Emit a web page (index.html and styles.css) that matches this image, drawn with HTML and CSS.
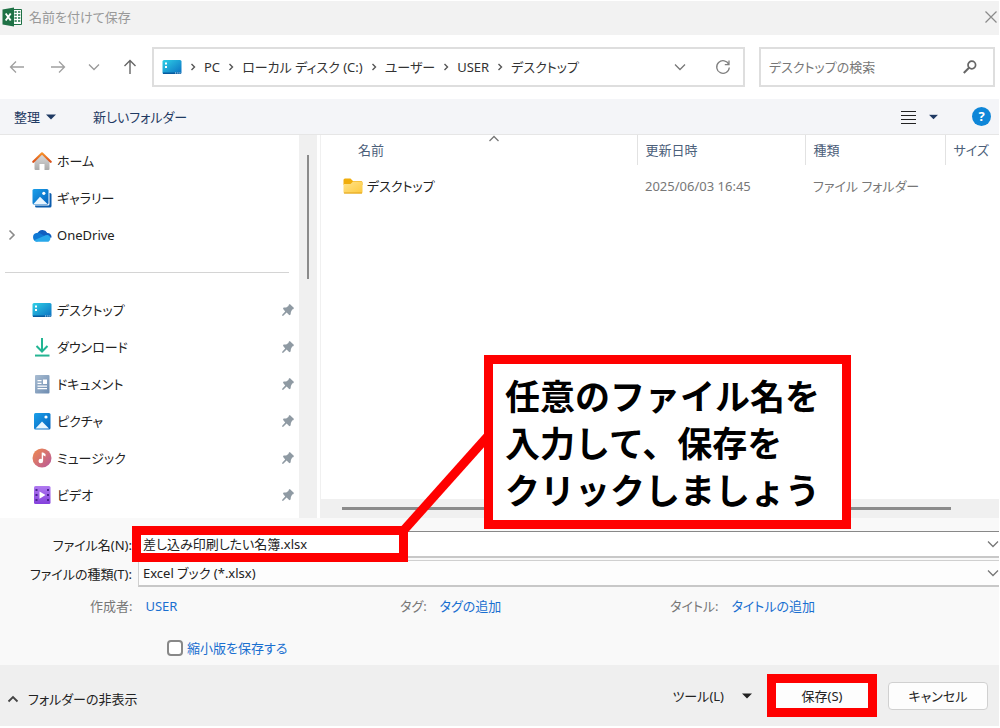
FILE: index.html
```html
<!DOCTYPE html>
<html lang="ja">
<head>
    <meta charset="UTF-8">
    <meta name="viewport" content="width=device-width, initial-scale=1.0">
    <title>名前を付けて保存</title>
    <link rel="stylesheet" href="styles.css">
</head>
<body>
    <!-- shared icons -->
    <svg class="defs" width="0" height="0" aria-hidden="true">
        <defs>
            <linearGradient id="g-desk" x1="0" y1="0" x2="1" y2="1">
                <stop offset="0" stop-color="#2fd0e6"/>
                <stop offset="1" stop-color="#0a6fc2"/>
            </linearGradient>
            <linearGradient id="g-pic" x1="0" y1="0" x2="1" y2="1">
                <stop offset="0" stop-color="#1aa0ea"/>
                <stop offset="1" stop-color="#0763bd"/>
            </linearGradient>
            <linearGradient id="g-roof" x1="0" y1="0" x2="0" y2="1">
                <stop offset="0" stop-color="#f7912a"/>
                <stop offset="1" stop-color="#d9511c"/>
            </linearGradient>
            <linearGradient id="g-wall" x1="0" y1="0" x2="0" y2="1">
                <stop offset="0" stop-color="#dcdcdc"/>
                <stop offset="1" stop-color="#aaa"/>
            </linearGradient>
            <linearGradient id="g-music" x1="0" y1="0" x2="1" y2="1">
                <stop offset="0" stop-color="#f08a4c"/>
                <stop offset="1" stop-color="#b8589c"/>
            </linearGradient>
            <linearGradient id="g-video" x1="0" y1="0" x2="0" y2="1">
                <stop offset="0" stop-color="#b07af0"/>
                <stop offset="1" stop-color="#8440dc"/>
            </linearGradient>
            <linearGradient id="g-doc" x1="0" y1="0" x2="1" y2="1">
                <stop offset="0" stop-color="#a9bdd2"/>
                <stop offset="1" stop-color="#6c8bb0"/>
            </linearGradient>
            <linearGradient id="g-folder" x1="0" y1="0" x2="1" y2="1">
                <stop offset="0" stop-color="#ffe38c"/>
                <stop offset="1" stop-color="#fdc93c"/>
            </linearGradient>
            <linearGradient id="g-down" x1="0" y1="0" x2="0" y2="1">
                <stop offset="0" stop-color="#35c3a0"/>
                <stop offset="1" stop-color="#16a585"/>
            </linearGradient>
        </defs>
        <symbol id="i-desktop" viewBox="0 0 20 20">
            <rect x="0.500" y="3" width="19" height="14" rx="1.500" fill="url(#g-desk)"/>
            <path d="M3 5.500h2v2H3zM3 9h2v2H3z" fill="#fff"/>
            <path d="M1 15.500h18v1.500H1z" fill="#075a9e"/>
            <path d="M13 15.500h1.200v1H13zM15.200 15.500h1.200v1h-1.200zM17.300 15.500h1.200v1h-1.200z" fill="#cfe9f8"/>
        </symbol>
        <symbol id="i-pin" viewBox="0 0 12 12">
            <path d="M7.800 0 12 4 11.200 5.200 10.200 5.600 8.900 8 8.600 10.600 7.400 11.200 4.600 8.600 1 12 0 11.600 0.400 10.600 3.200 7.400 1 4.800 1.600 3.600 4.200 3.400 6.400 2 6.800 0.800Z" fill="#8f9aa3"/>
        </symbol>
        <symbol id="i-down" viewBox="0 0 12 12">
            <path d="M1 3.500 6 8.500 11 3.500" fill="none" stroke="currentColor" stroke-width="1.300"/>
        </symbol>
        <symbol id="i-sep" viewBox="0 0 6 8">
            <path d="M1.500 1 4.500 4 1.500 7" fill="none" stroke="currentColor" stroke-width="1.400"/>
        </symbol>
        <symbol id="i-tri" viewBox="0 0 10 6">
            <path d="M0 0.500h10L5 5.500z" fill="currentColor"/>
        </symbol>
    </svg>

    <main class="dialog">
        <header class="titlebar">
            <svg class="icon" viewBox="0 0 20 20" aria-hidden="true">
                <path d="M11 2.500h8.500v15H11z" fill="#fff" stroke="#1e7145"/>
                <path d="M12.500 5h2.300M12.500 8h2.300M12.500 11h2.300M12.500 14h2.300M16 5h2.300M16 8h2.300M16 11h2.300M16 14h2.300" stroke="#1e7145" stroke-width="1.600"/>
                <path d="M0.500 2.500 12 0.500v19L0.500 17.500z" fill="#1e7145"/>
                <path d="M3.700 6.500 8.700 13.500M8.700 6.500 3.700 13.500" stroke="#fff" stroke-width="1.900"/>
            </svg>
            <h1 class="title">名前を付けて保存</h1>
            <button class="plain close" aria-label="閉じる">
                <svg width="14" height="14" viewBox="0 0 14 14"><path d="M1.500 1.500l11 11M12.500 1.500l-11 11" stroke="#8a8a8a" stroke-width="1.200"/></svg>
            </button>
        </header>

        <nav class="navbar">
            <div class="arrows">
                <button class="plain" aria-label="戻る"><svg width="16" height="16" viewBox="0 0 16 16"><path d="M15 8H1.500M7 2.500 1.500 8 7 13.500" fill="none" stroke="#a0a0a0" stroke-width="1.300"/></svg></button>
                <button class="plain" aria-label="進む"><svg width="16" height="16" viewBox="0 0 16 16"><path d="M1 8h13.500M9 2.500 14.500 8 9 13.500" fill="none" stroke="#a0a0a0" stroke-width="1.300"/></svg></button>
                <button class="plain history" aria-label="最近の場所"><svg width="12" height="12"><use href="#i-down"/></svg></button>
                <button class="plain" aria-label="上へ"><svg width="16" height="16" viewBox="0 0 16 16"><path d="M8 15V1.500M2.500 7 8 1.500 13.500 7" fill="none" stroke="#666" stroke-width="1.400"/></svg></button>
            </div>
            <div class="address">
                <svg class="icon" aria-hidden="true"><use href="#i-desktop"/></svg>
                <svg class="sep"><use href="#i-sep"/></svg>
                <a href="#">PC</a>
                <svg class="sep"><use href="#i-sep"/></svg>
                <a href="#">ローカル ディスク (C:)</a>
                <svg class="sep"><use href="#i-sep"/></svg>
                <a href="#">ユーザー</a>
                <svg class="sep"><use href="#i-sep"/></svg>
                <a href="#">USER</a>
                <svg class="sep"><use href="#i-sep"/></svg>
                <a href="#">デスクトップ</a>
                <span class="address-tools">
                    <button class="plain" aria-label="以前の場所"><svg width="12" height="12"><use href="#i-down"/></svg></button>
                    <button class="plain" aria-label="更新"><svg width="16" height="16" viewBox="0 0 16 16"><path d="M13.800 5.500A6.300 6.300 0 1 0 14.300 8.500M14 1.500V5.700H9.800" fill="none" stroke="#808080" stroke-width="1.300"/></svg></button>
                </span>
            </div>
            <div class="search">
                <input type="text" aria-label="デスクトップの検索" placeholder="デスクトップの検索">
                <svg width="14" height="14" viewBox="0 0 14 14" aria-hidden="true"><circle cx="8.800" cy="5" r="3.800" fill="none" stroke="#666" stroke-width="1.700"/><path d="M6 7.800 0.800 13" stroke="#666" stroke-width="2"/></svg>
            </div>
        </nav>

        <div class="toolbar">
            <button class="plain">整理 <svg width="10" height="6"><use href="#i-tri"/></svg></button>
            <button class="plain">新しいフォルダー</button>
            <span class="toolbar-right">
                <button class="plain view" aria-label="表示方法">
                    <svg width="15" height="14" viewBox="0 0 15 14"><path d="M0 1.500h15M0 5.500h15M0 9.500h15M0 13.500h15" stroke="#222" stroke-width="1"/></svg>
                    <svg width="9" height="6" viewBox="0 0 10 6"><use href="#i-tri"/></svg>
                </button>
                <button class="help" aria-label="ヘルプ">?</button>
            </span>
        </div>

        <div class="content">
            <aside class="sidebar">
                <ul class="places">
                    <li>
                        <span class="expand"></span>
                        <svg class="icon" viewBox="0 0 20 20"><path d="M2.500 9.500 10 3l7.500 6.500V18a1 1 0 0 1-1 1h-4v-6h-5v6h-4a1 1 0 0 1-1-1z" fill="url(#g-wall)"/><path d="M1.300 10.800 10 2.300l8.700 8.500" fill="none" stroke="url(#g-roof)" stroke-width="2.200" stroke-linecap="round" stroke-linejoin="round"/></svg>
                        <a href="#">ホーム</a>
                    </li>
                    <li>
                        <span class="expand"></span>
                        <svg class="icon" viewBox="0 0 20 20"><path d="M4 5h14a1.500 1.500 0 0 1 1.500 1.500V18a1.500 1.500 0 0 1-1.500 1.500H4.500A1.500 1.500 0 0 1 3 18z" fill="#0b5cad"/><rect x="0" y="0.500" width="17.500" height="17" rx="1.500" fill="#fff"/><rect x="0.500" y="1" width="16" height="15.500" rx="1.500" fill="url(#g-pic)"/><path d="M1.500 16 8 8.800 15.500 16z" fill="#eaf6ff"/><circle cx="11.800" cy="5.300" r="1.600" fill="#fff"/></svg>
                        <a href="#">ギャラリー</a>
                    </li>
                    <li>
                        <button class="plain expand" aria-label="展開"><svg width="8" height="12" viewBox="0 0 8 12"><path d="M1.500 1.500 6 6 1.500 10.500" fill="none" stroke="#8a8a8a" stroke-width="1.600"/></svg></button>
                        <svg class="icon" viewBox="0 0 20 20"><path d="M5.500 8.500A5.400 5.400 0 0 1 15.300 8 4 4 0 0 1 19.500 12.500L10 14z" fill="#0f5fc0"/><path d="M4.500 8a4 4 0 0 1 4 .5L15 12.500 5 16.500a4.300 4.300 0 0 1-.5-8.500z" fill="#0f78d4"/><path d="M2 15.300 12 11a5 5 0 0 1 4-1 3.700 3.700 0 0 1 .5 6.700H4.500A4.500 4.500 0 0 1 2 15.300z" fill="#28a8ea"/></svg>
                        <a href="#">OneDrive</a>
                    </li>
                </ul>
                <hr class="divider">
                <ul class="places">
                    <li>
                        <span class="expand"></span>
                        <svg class="icon"><use href="#i-desktop"/></svg>
                        <a href="#">デスクトップ</a>
                        <svg class="pin"><use href="#i-pin"/></svg>
                    </li>
                    <li>
                        <span class="expand"></span>
                        <svg class="icon" viewBox="0 0 20 20"><path d="M10 1v13M4.500 9l5.500 5.500L15.500 9" fill="none" stroke="#22b593" stroke-width="2"/><path d="M3 17.500h14.500v2H3z" fill="url(#g-down)"/></svg>
                        <a href="#">ダウンロード</a>
                        <svg class="pin"><use href="#i-pin"/></svg>
                    </li>
                    <li>
                        <span class="expand"></span>
                        <svg class="icon" viewBox="0 0 20 20"><rect x="3" y="1" width="14.500" height="18.500" rx="1" fill="url(#g-doc)"/><path d="M5.500 6h4v1.300h-4zM5.500 8.700h4V10h-4zM11 5.500h4v4.500h-4zM5.500 11.500H15v1.300H5.500zM5.500 14H15v1.300H5.500z" fill="#fff"/></svg>
                        <a href="#">ドキュメント</a>
                        <svg class="pin"><use href="#i-pin"/></svg>
                    </li>
                    <li>
                        <span class="expand"></span>
                        <svg class="icon" viewBox="0 0 20 20"><rect x="2" y="2" width="16.500" height="16.500" rx="1.500" fill="url(#g-pic)"/><path d="M3.500 17.500 10 10.500 17 17.500z" fill="#eaf6ff"/><circle cx="14" cy="6" r="1.600" fill="#fff"/></svg>
                        <a href="#">ピクチャ</a>
                        <svg class="pin"><use href="#i-pin"/></svg>
                    </li>
                    <li>
                        <span class="expand"></span>
                        <svg class="icon" viewBox="0 0 20 20"><circle cx="10" cy="10" r="9.500" fill="url(#g-music)"/><circle cx="8.800" cy="13" r="2.300" fill="#fff"/><path d="M9.700 13V4.500h1.400l2.400 1.500v2.500l-2.400-1.300V13z" fill="#fff"/></svg>
                        <a href="#">ミュージック</a>
                        <svg class="pin"><use href="#i-pin"/></svg>
                    </li>
                    <li>
                        <span class="expand"></span>
                        <svg class="icon" viewBox="0 0 20 20"><rect x="2" y="1" width="16.500" height="18" rx="1.500" fill="url(#g-video)"/><path d="M3.500 4h2v2h-2zM3.500 9h2v2h-2zM3.500 14h2v2h-2zM15 4h2v2h-2zM15 9h2v2h-2zM15 14h2v2h-2z" fill="#4a2391"/><path d="M7.500 6.500 13.500 10l-6 3.800z" fill="#fff"/></svg>
                        <a href="#">ビデオ</a>
                        <svg class="pin"><use href="#i-pin"/></svg>
                    </li>
                </ul>
            </aside>
            <div class="scroll-v"><div class="thumb-v"></div></div>

            <section class="files">
                <table>
                    <colgroup>
                        <col>
                        <col class="col-date">
                        <col class="col-type">
                        <col class="col-size">
                    </colgroup>
                    <thead>
                        <tr>
                            <th class="name-head">名前<svg class="sort" width="12" height="7" viewBox="0 0 12 7"><path d="M1.500 6 6 1.500 10.500 6" fill="none" stroke="#777" stroke-width="1.300"/></svg></th>
                            <th>更新日時</th>
                            <th>種類</th>
                            <th>サイズ</th>
                        </tr>
                    </thead>
                    <tbody>
                        <tr>
                            <td class="name-cell">
                                <div class="file">
                                    <svg class="icon" viewBox="0 0 20 20"><path d="M0.500 4A1.500 1.500 0 0 1 2 2.500h5.500L10 5h8a1.500 1.500 0 0 1 1.500 1.500V9h-19z" fill="#f0ad0c"/><path d="M0.500 8h7L10 5.500h8a1.500 1.500 0 0 1 1.500 1.500v9a1.500 1.500 0 0 1-1.500 1.500H2A1.500 1.500 0 0 1 .5 16z" fill="url(#g-folder)"/><path d="M1 17h18" stroke="#e0a21a"/></svg>
                                    デスクトップ
                                </div>
                            </td>
                            <td>2025/06/03 16:45</td>
                            <td>ファイル フォルダー</td>
                            <td></td>
                        </tr>
                    </tbody>
                </table>
                <div class="scroll-h"><div class="thumb-h"></div></div>
            </section>
        </div>

        <form class="fields" id="save-form">
            <div class="field">
                <label for="filename">ファイル名(N):</label>
                <div class="combo combo-name">
                    <input type="text" id="filename" value="差し込み印刷したい名簿.xlsx">
                    <svg class="combo-arrow" width="12" height="12"><use href="#i-down"/></svg>
                </div>
            </div>
            <div class="field">
                <label for="filetype">ファイルの種類(T):</label>
                <div class="combo">
                    <select id="filetype">
                        <option>Excel ブック (*.xlsx)</option>
                    </select>
                    <svg class="combo-arrow" width="12" height="12"><use href="#i-down"/></svg>
                </div>
            </div>
            <div class="meta">
                <div class="meta-item"><span class="meta-label">作成者:</span><a href="#">USER</a></div>
                <div class="meta-item"><span class="meta-label">タグ:</span><a href="#">タグの追加</a></div>
                <div class="meta-item"><span class="meta-label">タイトル:</span><a href="#">タイトルの追加</a></div>
            </div>
            <div class="thumb-check">
                <input type="checkbox" id="thumbnail">
                <label for="thumbnail">縮小版を保存する</label>
            </div>
        </form>

        <footer class="footer">
            <button class="plain hide-folders">
                <svg width="12" height="8" viewBox="0 0 12 8"><path d="M1.500 6.500 6 2 10.500 6.500" fill="none" stroke="#444" stroke-width="1.800"/></svg>
                フォルダーの非表示
            </button>
            <div class="actions">
                <button class="plain tools">ツール(L) <svg width="10" height="6"><use href="#i-tri"/></svg></button>
                <button class="save" type="submit" form="save-form">保存(S)</button>
                <button class="cancel">キャンセル</button>
            </div>
        </footer>

        <!-- instruction balloon over the dialog -->
        <svg class="pointer" width="100" height="110" viewBox="0 0 100 110" aria-hidden="true"><path d="M10 100 94 6" stroke="#f00" stroke-width="9"/></svg>
        <p class="callout">任意のファイル名を<br>入力して、保存を<br>クリックしましょう</p>
    </main>
</body>
</html>
```
FILE: styles.css
```css
* {
    box-sizing: border-box;
}

body {
    margin: 0;
    background: #fff;
    color: #222;
    font-family: "Noto Sans", "Noto Sans CJK JP", sans-serif;
    font-size: 13px;
    line-height: 20px;
    font-feature-settings: "palt";
}

a {
    color: inherit;
    text-decoration: none;
}

button, input, select {
    font: inherit;
    font-feature-settings: inherit;
    color: inherit;
}

svg {
    flex: none;
}

.defs {
    position: absolute;
}

.plain {
    display: flex;
    align-items: center;
    padding: 0;
    border: 0;
    background: none;
}

.icon {
    width: 20px;
    height: 20px;
}

.dialog {
    position: relative;
    display: flex;
    flex-direction: column;
    padding: 1px 1px 2px 0;
}

/* title bar */
.titlebar {
    display: flex;
    align-items: center;
    gap: 7px;
    height: 34px;
    padding: 0 1px 2px 2px;
    background: #f2f2f2;
}

.title {
    margin: 0;
    font-size: 13px;
    font-weight: normal;
    color: #999;
}

.close {
    margin-left: auto;
}

/* navigation */
.navbar {
    display: flex;
    align-items: center;
    gap: 14px;
    height: 64px;
    padding: 0 4px 0 9px;
}

.arrows {
    display: flex;
    align-items: center;
    gap: 25px;
    width: 129px;
}

.arrows .history {
    margin: 0 -3px;
    color: #999;
}

.address, .search {
    display: flex;
    align-items: center;
    height: 40px;
    border: 2px solid #dedede;
    background: #fff;
}

.address {
    flex: 1;
    gap: 8px;
    padding: 0 12px 0 8px;
    color: #333;
    white-space: nowrap;
}

.sep {
    width: 6px;
    height: 8px;
    color: #555;
}

.address-tools {
    display: flex;
    align-items: center;
    gap: 29px;
    margin-left: auto;
    color: #777;
}

.search {
    width: 236px;
    padding: 0 16px 0 8px;
}

.search input {
    flex: 1;
    min-width: 0;
    padding: 0;
    border: 0;
    outline: 0;
}

.search input::placeholder {
    color: #777;
    opacity: 1;
}

/* toolbar */
.toolbar {
    display: flex;
    align-items: center;
    gap: 37px;
    height: 36px;
    padding: 0 8px 0 14px;
    border-bottom: 1px solid #e6e6e6;
    background: #f4f5f8;
    color: #1f3a63;
}

.toolbar .plain {
    gap: 6px;
}

.toolbar-right {
    display: flex;
    align-items: center;
    gap: 34px;
    margin-left: auto;
}

.toolbar-right .view {
    gap: 13px;
}

.help {
    width: 19px;
    height: 19px;
    padding: 0;
    border: 0;
    border-radius: 50%;
    background: #0e86d8;
    color: #fff;
    font-weight: bold;
    line-height: 19px;
}

/* folder tree */
.content {
    display: flex;
}

.sidebar {
    width: 299px;
    padding: 7px 0 5px;
}

.places {
    margin: 0;
    padding: 0;
    list-style: none;
}

.places li {
    display: flex;
    align-items: center;
    height: 37px;
    padding: 0 5px 0 8px;
}

.expand {
    width: 24px;
}

.places a {
    margin-left: 5px;
}

.pin {
    width: 12px;
    height: 12px;
    margin-left: auto;
}

.divider {
    height: 1px;
    margin: 19px 10px 18px 5px;
    border: 0;
    background: #d4d4d4;
}

.scroll-v {
    width: 18px;
    padding: 20px 0 0 8px;
    background: #f0f0f0;
}

.thumb-v {
    width: 2px;
    height: 124px;
    background: #8b8b8b;
}

/* file list */
.files {
    display: flex;
    flex: 1;
    flex-direction: column;
    justify-content: space-between;
    margin-left: 3px;
    border-left: 1px solid #f0f0f0;
}

table {
    width: 100%;
    border-collapse: collapse;
    table-layout: fixed;
}

.col-date {
    width: 168px;
}

.col-type {
    width: 140px;
}

.col-size {
    width: 54px;
}

th, td {
    height: 30px;
    padding: 0 0 0 8px;
    font-weight: normal;
    text-align: left;
    white-space: nowrap;
}

th {
    border-left: 1px solid #e2e2e2;
    color: #4c607a;
}

td {
    height: 42px;
    color: #777;
}

th.name-head {
    position: relative;
    border-left: 0;
    padding-left: 37px;
}

.sort {
    position: absolute;
    top: 0;
    left: 53%;
}

td.name-cell {
    padding-left: 22px;
    color: #222;
}

.file {
    display: flex;
    align-items: center;
    gap: 4px;
}

.scroll-h {
    height: 19px;
    padding: 8px 48px 0 21px;
    background: #f0f0f0;
}

.thumb-h {
    height: 3px;
    background: #8b8b8b;
}

/* name and type */
.fields {
    display: flex;
    flex-direction: column;
    gap: 2px;
    height: 147px;
    padding-top: 13px;
    background: #f9f9f9;
}

.field {
    display: flex;
    align-items: center;
    gap: 6px;
}

.field label {
    width: 132px;
    text-align: right;
    white-space: nowrap;
}

.combo {
    position: relative;
    display: flex;
    flex: 1;
    align-items: center;
    height: 27px;
    border: 1px solid #d0d0d0;
    border-right: 0;
    border-bottom: 2px solid #c8c8c8;
    background: #fdfdfd;
}

.combo-name {
    border-top-color: #888;
    background: #fff;
}

/* red frame around the typed name */
.combo-name::after {
    content: "";
    position: absolute;
    top: -6px;
    left: -7px;
    z-index: 1;
    box-sizing: border-box;
    width: 276px;
    height: 36px;
    border: 9px solid #f00;
    pointer-events: none;
}

.combo input, .combo select {
    flex: 1;
    height: 20px;
    padding: 0 0 0 4px;
    border: 0;
    outline: 0;
    background: none;
    appearance: none;
}

.combo-arrow {
    color: #777;
    pointer-events: none;
}

.meta {
    display: grid;
    grid-template-columns: 310fr 270fr 329fr;
    margin-top: 7px;
    padding-left: 90px;
}

.meta-item {
    display: flex;
    gap: 13px;
    white-space: nowrap;
}

.meta-label {
    color: #777;
}

.meta-item a, .thumb-check label {
    color: #1a6fd0;
}

.thumb-check {
    display: flex;
    align-items: center;
    gap: 4px;
    margin-top: 20px;
    padding-left: 167px;
}

.thumb-check input {
    width: 16px;
    height: 16px;
    margin: 0;
    border: 2px solid #888;
    border-radius: 4px;
    background: #fff;
    appearance: none;
}

/* bottom buttons */
.footer {
    display: flex;
    align-items: center;
    justify-content: space-between;
    height: 61px;
    padding: 0 11px 0 7px;
    background: #efefef;
}

.hide-folders {
    gap: 9px;
    padding-top: 6px;
}

.actions {
    display: flex;
    align-items: center;
}

.tools {
    gap: 18px;
    margin-right: 15px;
}

.save {
    width: 110px;
    height: 43px;
    margin-right: 11px;
    padding: 0;
    border: 9px solid #f00;
    background: #fdfdfd;
}

.cancel {
    width: 100px;
    height: 28px;
    padding: 0;
    border: 1px solid #d0d0d0;
    border-radius: 4px;
    background: #fdfdfd;
}

.callout {
    position: absolute;
    top: 355px;
    left: 484px;
    margin: 0;
    padding: 7px 22px 8px 12px;
    border: 9px solid #f00;
    background: #fff;
    color: #000;
    font-family: "Noto Sans CJK JP", sans-serif;
    font-feature-settings: normal;
    font-size: 35px;
    font-weight: bold;
    line-height: 47px;
    white-space: nowrap;
}

.pointer {
    position: absolute;
    top: 430px;
    left: 394px;
}
```
